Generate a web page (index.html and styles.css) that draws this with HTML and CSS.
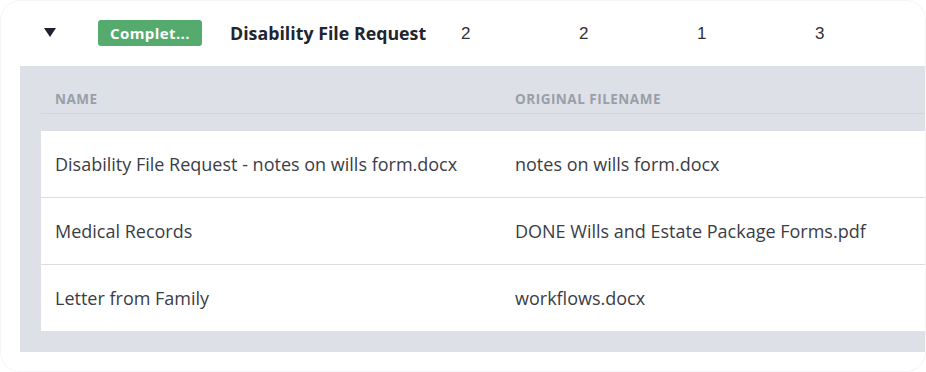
FILE: index.html
```html
<!DOCTYPE html>
<html>
<head>
<meta charset="utf-8">
<link rel="stylesheet" href="styles.css">
</head>
<body>
<div class="card">
  <div class="summary">
    <div class="toggle"><span class="caret"></span></div>
    <div class="badge">Complet...</div>
    <div class="title">Disability File Request</div>
    <div class="num">2</div>
    <div class="num">2</div>
    <div class="num">1</div>
    <div class="num">3</div>
  </div>
  <div class="panel">
    <div class="thead">
      <div class="col-name">NAME</div>
      <div class="col-file">ORIGINAL FILENAME</div>
    </div>
    <div class="tbody">
      <div class="row">
        <div class="col-name">Disability File Request - notes on wills form.docx</div>
        <div class="col-file">notes on wills form.docx</div>
      </div>
      <div class="row">
        <div class="col-name">Medical Records</div>
        <div class="col-file">DONE Wills and Estate Package Forms.pdf</div>
      </div>
      <div class="row">
        <div class="col-name">Letter from Family</div>
        <div class="col-file">workflows.docx</div>
      </div>
    </div>
  </div>
</div>
</body>
</html>
```

FILE: styles.css
```css
html, body {
  margin: 0;
  padding: 0;
  background: #ffffff;
}
.card {
  box-sizing: border-box;
  width: 926px;
  height: 372px;
  border: 1px solid #f5f5f7;
  border-radius: 20px;
  overflow: hidden;
  background: #fff;
  font-family: "Open Sans", Lato, sans-serif;
}
.summary {
  display: flex;
  align-items: center;
  height: 65px;
  padding-left: 43px;
}
.summary > div {
  flex-shrink: 0;
}
.toggle {
  width: 54px;
  display: flex;
  align-items: center;
}
.caret {
  width: 0;
  height: 0;
  border-left: 6px solid transparent;
  border-right: 6px solid transparent;
  border-top: 9px solid #1e2130;
  margin-top: -2px;
}
.badge {
  width: 104px;
  height: 26px;
  margin-top: -2px;
  border-radius: 3px;
  background: #55aa6e;
  color: #fff;
  font-weight: 700;
  font-size: 15px;
  letter-spacing: 0.4px;
  display: flex;
  align-items: center;
  justify-content: center;
}
.title {
  margin-left: 28px;
  width: 231px;
  font-weight: 700;
  font-size: 17.8px;
  color: #22252f;
  margin-top: -1px;
}
.num {
  width: 118px;
  font-family: "Liberation Sans", Arial, sans-serif;
  font-size: 17px;
  color: #2f3138;
}
.panel {
  margin-left: 19px;
  background: #dde0e7;
  padding: 0 0 21px 21px;
}
.thead {
  display: flex;
  box-sizing: border-box;
  height: 48px;
  align-items: flex-end;
  padding-bottom: 5px;
  border-bottom: 1px solid #d2d5dc;
  margin-bottom: 17px;
  font-size: 13.5px;
  font-weight: 700;
  letter-spacing: 0.5px;
  color: #9a9ea8;
}
.thead .col-name, .row .col-name {
  width: 460px;
  padding-left: 14px;
  flex-shrink: 0;
}
.tbody {
  background: #fff;
}
.row {
  display: flex;
  align-items: center;
  height: 66px;
  font-size: 18px;
  color: #3a3d46;
}
.row + .row {
  border-top: 1px solid #dcdde1;
}
```
